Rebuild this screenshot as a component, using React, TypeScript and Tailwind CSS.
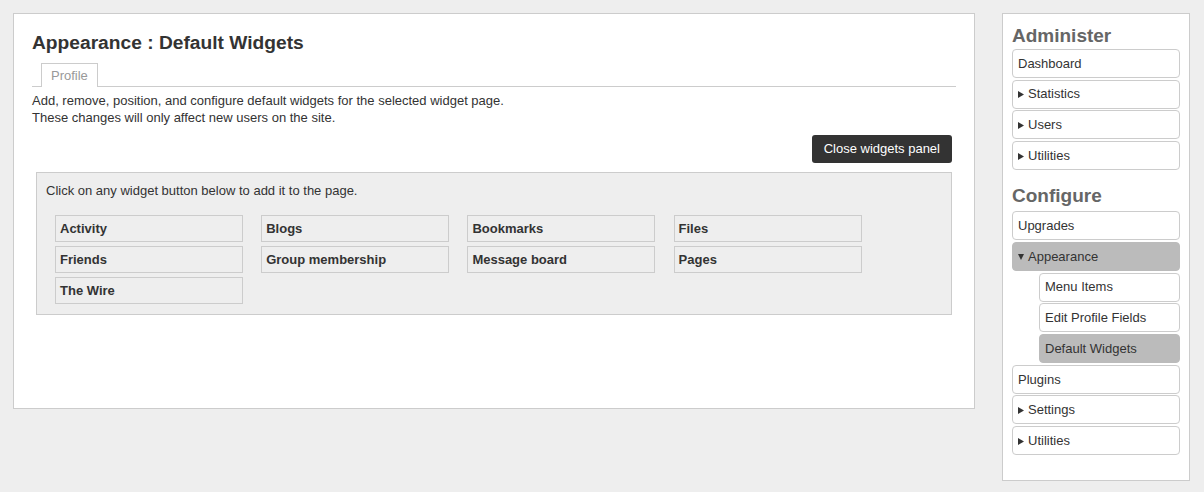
const WIDGETS = [
  'Activity',
  'Blogs',
  'Bookmarks',
  'Files',
  'Friends',
  'Group membership',
  'Message board',
  'Pages',
  'The Wire',
];

type NavItem = {
  label: string;
  arrow?: 'right' | 'down';
  selected?: boolean;
  child?: boolean;
};

const ADMINISTER: NavItem[] = [
  { label: 'Dashboard' },
  { label: 'Statistics', arrow: 'right' },
  { label: 'Users', arrow: 'right' },
  { label: 'Utilities', arrow: 'right' },
];

const CONFIGURE: NavItem[] = [
  { label: 'Upgrades' },
  { label: 'Appearance', arrow: 'down', selected: true },
  { label: 'Menu Items', child: true },
  { label: 'Edit Profile Fields', child: true },
  { label: 'Default Widgets', child: true, selected: true },
  { label: 'Plugins' },
  { label: 'Settings', arrow: 'right' },
  { label: 'Utilities', arrow: 'right' },
];

export default function App() {
  return (
    <div
      className="flex min-h-[492px] items-start gap-[27px] bg-[#eeeeee] pl-[13px] pt-[13px] text-[13px] text-[#333333]"
      style={{ fontFamily: '"Liberation Sans", Arial, sans-serif' }}
    >
      <main className="h-[396px] w-[962px] border border-[#cccccc] bg-white px-[18px] pt-[17px]">
        <h2 className="text-[19.2px] font-bold leading-[23px] text-[#333333]">Appearance : Default Widgets</h2>

        <div className="mt-[9px] flex border-b border-[#cccccc] pl-[9px]">
          <div className="-mb-px h-[24px] border border-b-0 border-[#cccccc] bg-white px-[9px] leading-[24px] text-[#999999]">
            Profile
          </div>
        </div>

        <p className="mt-[5px] leading-[17px]">
          Add, remove, position, and configure default widgets for the selected widget page.
          <br />
          These changes will only affect new users on the site.
        </p>

        <div className="mt-[9px] flex justify-end pr-[4px]">
          <button className="h-[28px] rounded-[3px] bg-[#333333] px-[12px] text-white">Close widgets panel</button>
        </div>

        <div className="mx-[4px] mt-[9px] border border-[#cccccc] bg-[#eeeeee] px-[9px] pb-[10px] pt-[9px]">
          <p className="leading-[17px]">Click on any widget button below to add it to the page.</p>
          <div className="ml-[9px] mt-[16px] grid grid-cols-[repeat(4,188px)] gap-x-[18.2px] gap-y-[4px]">
            {WIDGETS.map((w) => (
              <div
                key={w}
                className="h-[27px] border border-[#cccccc] bg-[#eeeeee] pl-[4px] font-bold leading-[25px]"
              >
                {w}
              </div>
            ))}
          </div>
        </div>
      </main>

      <aside className="h-[468px] w-[188px] border border-[#cccccc] bg-white px-[9px] pt-[10px]">
        <h2 className="mb-[2px] text-[19px] font-bold leading-[23px] text-[#666666]">Administer</h2>
        <NavList items={ADMINISTER} />
        <h2 className="mb-[4px] mt-[14px] text-[19px] font-bold leading-[23px] text-[#666666]">Configure</h2>
        <NavList items={CONFIGURE} />
      </aside>
    </div>
  );
}

function NavList({ items }: { items: NavItem[] }) {
  return (
    <div className="flex flex-col gap-[1.72px]">
      {items.map((item) => (
        <div
          key={item.label}
          className={`flex h-[29px] items-center rounded-[4px] border pl-[5px] ${
            item.child ? 'ml-[27px]' : ''
          } ${item.selected ? 'border-[#bbbbbb] bg-[#bbbbbb]' : 'border-[#cccccc] bg-white'}`}
        >
          {item.arrow && <Arrow dir={item.arrow} />}
          <span>{item.label}</span>
        </div>
      ))}
    </div>
  );
}

function Arrow({ dir }: { dir: 'right' | 'down' }) {
  return (
    <svg width="6" height="7" viewBox="0 0 6 7" className="mr-[4px] mt-px shrink-0">
      {dir === 'right' ? <path d="M0 0 L6 3.5 L0 7 Z" fill="#333" /> : <path d="M0 1 L6 1 L3 7 Z" fill="#333" />}
    </svg>
  );
}
